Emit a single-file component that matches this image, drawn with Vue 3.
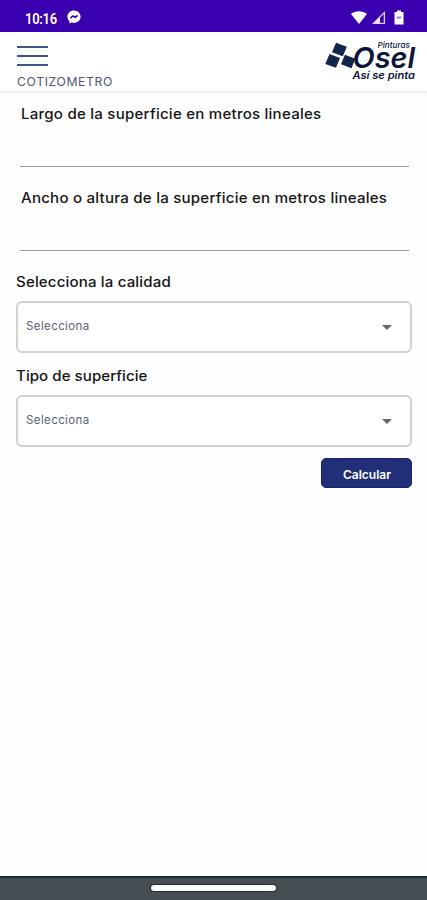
<script setup>
import { ref } from 'vue'

const inputs = ref([
  { id: 'largo', label: 'Largo de la superficie en metros lineales', value: '' },
  { id: 'ancho', label: 'Ancho o altura de la superficie en metros lineales', value: '' },
])
const selects = ref([
  { id: 'calidad', label: 'Selecciona la calidad' },
  { id: 'tipo', label: 'Tipo de superficie' },
])
</script>

<template>
  <div class="screen">
    <div class="status">
      <span class="time">10:16</span>
      <svg class="messenger" width="14" height="14" viewBox="0 0 14 14">
        <path d="M7 .4C3.200.4.4 3.100.4 6.700c0 1.900.8 3.500 2.100 4.600v2.200l2.100-1.100c.8.2 1.500.3 2.400.3 3.800 0 6.600-2.600 6.600-6S10.800.4 7 .4z" fill="#fff" />
        <path d="M3.300 8.200 6 5.900l2 1.300 2.700-1.700" fill="none" stroke="#3a00b0" stroke-width="1.600" />
      </svg>
      <svg class="tray" width="56" height="16" viewBox="0 0 56 16">
        <path d="M0 4C4.500.3 11.500.3 16 4L8 14z" fill="#fff" />
        <path d="M33.400 2.500v10.800H22.500z" fill="none" stroke="#d9ccf2" stroke-width="1.300" />
        <path d="M29 6.500v6.800h-6.500z" fill="#e8dff8" />
        <path d="M43.500 2H46V.5h4V2h2.500v12.500h-9z" fill="#fff" />
        <path d="M46 6.500h4v2.200h-4z" fill="#9c80d8" />
      </svg>
    </div>
    <header class="header">
      <div class="menu">
        <div class="burger"><i></i><i></i><i></i></div>
        <span class="title">COTIZOMETRO</span>
      </div>
      <svg class="logo" width="94" height="44" viewBox="0 0 94 44">
        <g fill="#12254a">
          <path d="M12 1.800 22.800 5.800 18.800 15.200 8 11.200z" />
          <path d="M5.500 13 16 17 12 26.800 1.300 22.900z" />
          <path d="M20.800 13.800 31.300 17.800 27.500 27.300 17 23.200z" />
        </g>
        <g font-family="Inter, 'Liberation Sans', sans-serif" fill="#0b1639">
          <text x="28.500" y="26.500" font-size="29" font-weight="600" font-style="italic" textLength="62.500" lengthAdjust="spacingAndGlyphs">Osel</text>
          <text x="53.500" y="6.800" font-size="7.500" font-weight="500" font-style="italic" textLength="32.500" lengthAdjust="spacingAndGlyphs">Pinturas</text>
          <text x="28.500" y="38.300" font-size="10.500" font-weight="600" font-style="italic" textLength="62.500" lengthAdjust="spacingAndGlyphs">Así se pinta</text>
        </g>
      </svg>
    </header>
    <main class="form">
      <label v-for="f in inputs" :key="f.id" class="field">
        <span class="label" :class="f.id">{{ f.label }}</span>
        <input v-model="f.value" class="input" type="text" />
      </label>
      <div v-for="s in selects" :key="s.id" class="choice">
        <span class="label" :class="s.id">{{ s.label }}</span>
        <button class="select" type="button">
          <span>Selecciona</span>
          <svg width="10" height="5" viewBox="0 0 10 5"><path d="M0 0h10L5 5z" fill="#666" /></svg>
        </button>
      </div>
      <button class="submit" type="button">Calcular</button>
    </main>
    <div class="navbar"><div class="handle"></div></div>
  </div>
</template>

<style>
body { margin: 0; }
</style>

<style scoped>
.screen {
  width: 427px;
  height: 900px;
  display: flex;
  flex-direction: column;
  background: #fefefe;
  font-family: Inter, "Liberation Sans", sans-serif;
  color: #151515;
  overflow: hidden;
}
.screen * { box-sizing: border-box; }
.status {
  height: 32px;
  flex: none;
  display: flex;
  align-items: center;
  padding: 2px 20px 0 25px;
  background: #3a00b0;
  color: #fff;
}
.time {
  width: 42px;
  padding-top: 3px;
  font: 600 14px/18px Roboto, sans-serif;
  letter-spacing: -0.3px;
  white-space: nowrap;
  transform: scaleX(0.93);
  transform-origin: left;
}
.tray { margin: 1px 0 0 auto; }
.header {
  height: 59px;
  flex: none;
  display: flex;
  justify-content: space-between;
  padding: 9px 9px 0 17px;
  background: #fff;
  box-shadow: 0 1px 4px rgba(0, 0, 0, 0.13);
}
.menu { display: flex; flex-direction: column; padding-top: 5px; }
.burger { width: 31px; display: flex; flex-direction: column; gap: 7px; }
.burger i { height: 2px; background: #3c5688; }
.title {
  margin-top: 9px;
  font-size: 11.500px;
  line-height: 14px;
  letter-spacing: 0.6px;
  color: #50546f;
  white-space: nowrap;
  transform: scaleX(1.06);
  transform-origin: left;
}
.form { flex: 1; display: flex; flex-direction: column; padding: 12px 15px 0 16px; }
.field { height: 84px; display: flex; flex-direction: column; padding: 0 3px 0 4px; }
.label {
  align-self: flex-start;
  height: 20px;
  font-size: 14px;
  line-height: 21px;
  font-weight: 500;
  white-space: nowrap;
  letter-spacing: 0.22px;
  transform: scaleX(1.075);
  transform-origin: left;
}
.label.calidad { letter-spacing: 0.15px; }
.label.tipo { letter-spacing: 0.05px; }
.field .label { margin-left: 1px; }
.input { height: 44px; border: 0; border-bottom: 1px solid #999; background: transparent; outline: none; padding: 0; }
.choice { display: flex; flex-direction: column; height: 94px; }
.select {
  height: 52px;
  margin-top: 10px;
  display: flex;
  align-items: center;
  justify-content: space-between;
  padding: 0 18px 3px 8px;
  border: 2px solid #d2d2d2;
  border-radius: 6px;
  background: #fff;
  font: 400 11.500px/14px Inter, sans-serif;
  letter-spacing: 0.4px;
  color: #5b6179;
}
.select svg { margin-top: 4px; }
.submit {
  width: 91px;
  height: 30px;
  align-self: flex-end;
  margin-top: -1px;
  padding: 3px 0 0 1px;
  border: 1px solid #16216f;
  border-radius: 5px;
  background: #212f78;
  color: #fff;
  font: 600 12px/16px Inter, sans-serif;
}
.navbar {
  height: 24px;
  flex: none;
  display: flex;
  justify-content: center;
  padding-top: 7px;
  border-top: 2px solid #152d39;
  background: #464d53;
}
.handle { width: 125px; height: 6px; border-radius: 3px; background: #fff; box-shadow: 0 0 0 1px #1b303a; }
</style>
